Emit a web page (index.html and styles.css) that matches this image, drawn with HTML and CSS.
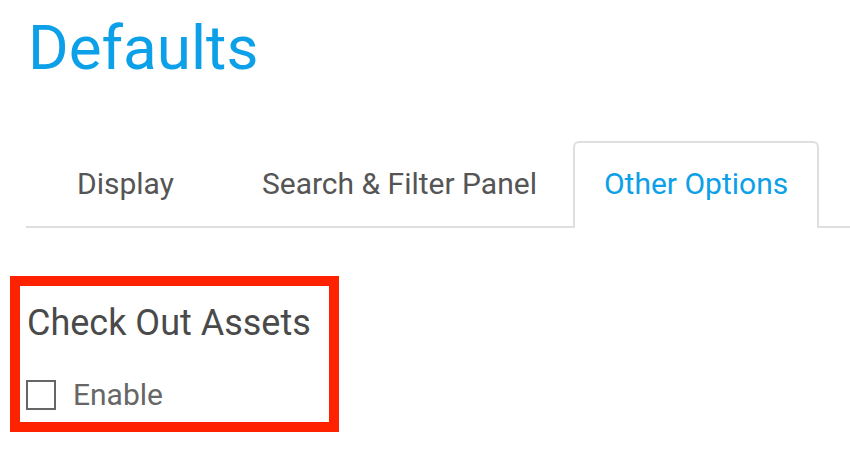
FILE: index.html
```html
<!DOCTYPE html>
<html>
<head>
<meta charset="utf-8">
<link rel="stylesheet" href="styles.css">
</head>
<body>
<div class="page">
  <h1 class="title">Defaults</h1>
  <div class="tabs">
    <div class="tab tab-display">Display</div>
    <div class="tab tab-search">Search &amp; Filter Panel</div>
    <div class="tab tab-other active">Other Options</div>
  </div>
  <div class="section">
    <h2 class="section-title">Check Out Assets</h2>
    <label class="check">
      <span class="box"></span>
      <span class="check-label">Enable</span>
    </label>
  </div>
</div>
</body>
</html>
```

FILE: styles.css
```css
html, body {
  margin: 0;
  padding: 0;
  background: #ffffff;
}
.page {
  width: 850px;
  height: 468px;
  overflow: hidden;
  font-family: Roboto, "Liberation Sans", sans-serif;
}
.title {
  margin: 0;
  padding: 12px 0 0 28px;
  font-size: 62px;
  font-weight: 400;
  line-height: 72px;
  color: #0ca0e8;
}
.tabs {
  display: flex;
  align-items: flex-end;
  margin: 57px 0 0 26px;
  border-bottom: 2px solid #dedede;
  height: 85px;
}
.tab {
  box-sizing: border-box;
  height: 85px;
  padding: 0 29px 3px;
  display: flex;
  align-items: center;
  font-size: 30px;
  color: #555555;
  border: 2px solid transparent;
  border-bottom: none;
}
.tab-display {
  margin-left: 20px;
}
.tab-search {
  margin-left: 26px;
}
.tab-other {
  margin-left: 5px;
}
.tab.active {
  color: #0ca0e8;
  border-color: #dedede;
  border-radius: 6px 6px 0 0;
  background: #fff;
  margin-bottom: -2px;
  height: 87px;
  padding-bottom: 5px;
}
.section {
  box-sizing: border-box;
  width: 329px;
  height: 156px;
  margin: 48px 0 0 10px;
  border: 10px solid #ff2200;
  padding: 15px 0 0 7px;
}
.section-title {
  margin: 0;
  font-size: 36px;
  font-weight: 400;
  line-height: 44px;
  color: #4a4a4a;
}
.check {
  display: flex;
  align-items: center;
  margin-top: 32px;
}
.box {
  box-sizing: border-box;
  width: 30px;
  height: 30px;
  border: 2px solid #666666;
  margin-left: -1px;
}
.check-label {
  margin-left: 17px;
  font-size: 30px;
  color: #666666;
}
```
